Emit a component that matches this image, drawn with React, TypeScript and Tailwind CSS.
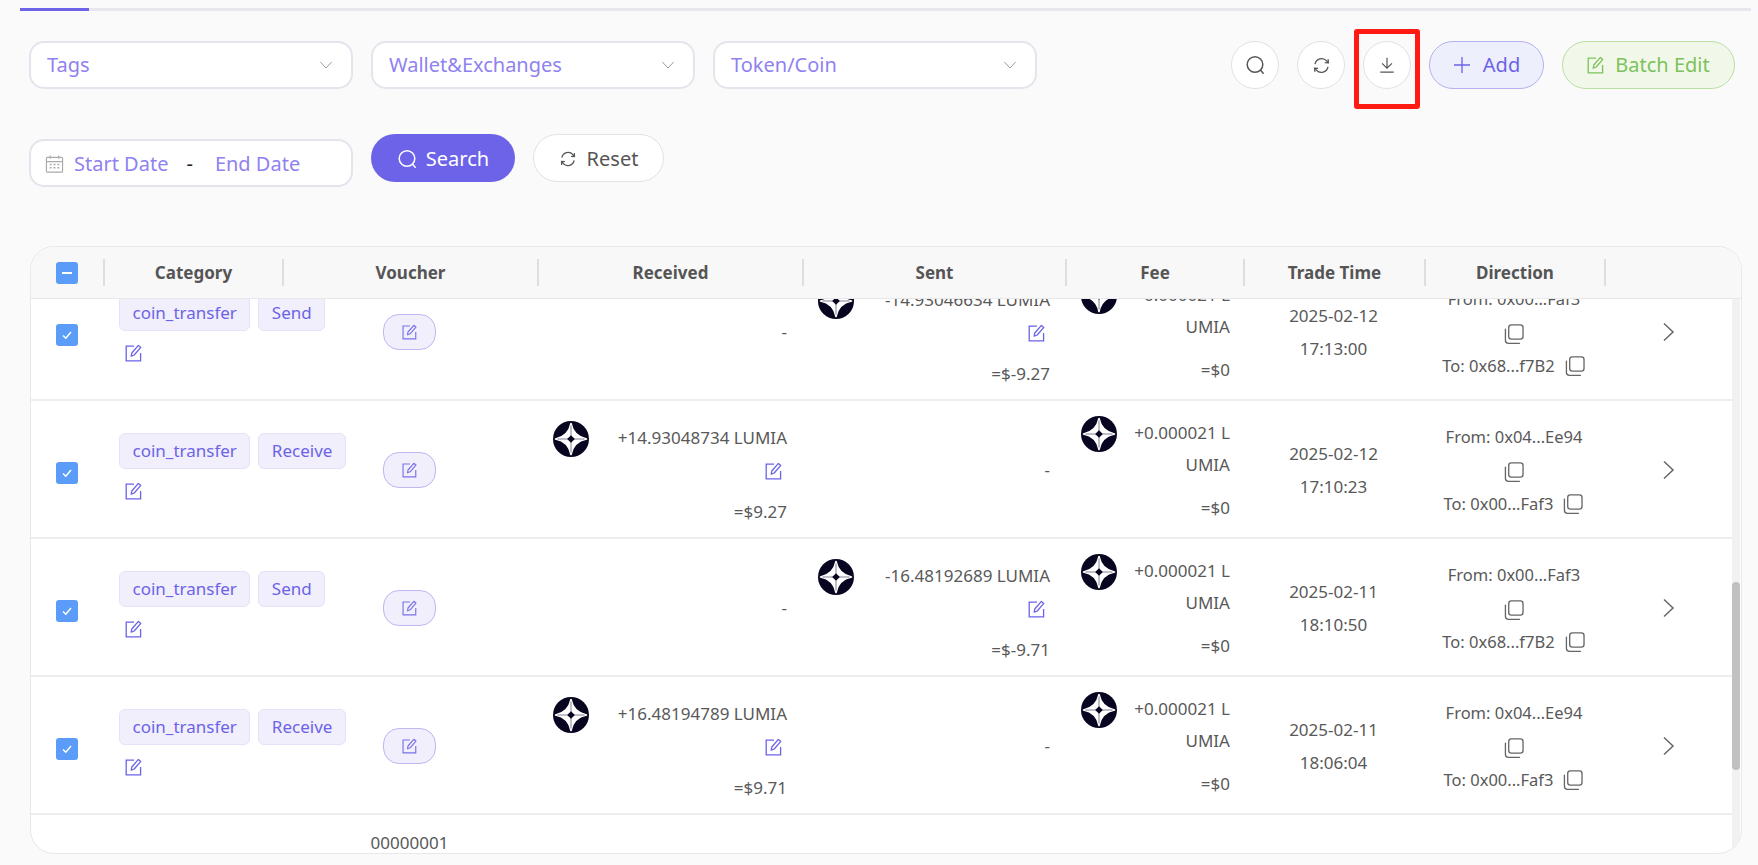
import React from "react";

const font = { fontFamily: '"Noto Sans", sans-serif' };

function Edit({ className = "" }: { className?: string }) {
  return (
    <svg viewBox="0 0 17 18" fill="none" stroke="currentColor" strokeWidth="1.3" className={className}>
      <path d="M9 2.2H1.2V16.8H15.6V9" />
      <path d="M6.2 12.2 6.8 9 13.4 1.4 15.8 3.4 9.2 11z" strokeLinejoin="round" />
    </svg>
  );
}

function Copy() {
  return (
    <svg viewBox="0 0 20 20" fill="none" stroke="#666" strokeWidth="1.2" className="w-[22px] h-[22px] inline-block">
      <rect x="5.2" y="1.7" width="13" height="13" rx="2.4" />
      <path d="M2.2 5.5v10.2a2.8 2.8 0 0 0 2.8 2.8h10" strokeLinecap="round" />
    </svg>
  );
}

function Logo() {
  return (
    <svg viewBox="0 0 36 36" className="w-9 h-9 shrink-0">
      <circle cx="18" cy="18" r="18" fill="#07051f" />
      <path d="M18 2.5Q20.5 15.5 33.5 18 20.5 20.5 18 33.5 15.5 20.5 2.5 18 15.5 15.5 18 2.5z" fill="#fff" stroke="#fff" strokeWidth="1.6" strokeLinejoin="round" />
      <path d="M18 4.5v27M4.5 18h27" stroke="#77758a" strokeWidth="0.9" />
      <path d="M18 14.2 21.8 18 18 21.8 14.2 18z" fill="#07051f" />
    </svg>
  );
}

function Chevron({ className = "" }: { className?: string }) {
  return (
    <svg viewBox="0 0 12 20" fill="none" stroke="currentColor" strokeWidth="1.5" className={className}>
      <path d="M1.5 1.5 10.5 10 1.5 18.5" />
    </svg>
  );
}

function SearchIcon({ className = "" }: { className?: string }) {
  return (
    <svg viewBox="0 0 20 20" fill="none" stroke="currentColor" strokeWidth="1.5" className={className}>
      <circle cx="10" cy="9.5" r="7.8" />
      <path d="m15.6 15.2 2.6 3" strokeLinecap="round" />
    </svg>
  );
}

function RefreshIcon({ className = "" }: { className?: string }) {
  return (
    <svg viewBox="0 0 20 20" fill="none" stroke="currentColor" strokeWidth="1.4" className={className}>
      <path d="M3.2 8.5A7 7 0 0 1 15.4 5.2L17 7" />
      <path d="M16.8 11.5A7 7 0 0 1 4.6 14.8L3 13" />
      <path d="M13.5 7 17.2 7.2 17 3.4M6.5 13 2.8 12.8 3 16.6" />
    </svg>
  );
}

function DownloadIcon({ className = "" }: { className?: string }) {
  return (
    <svg viewBox="0 0 20 20" fill="none" stroke="currentColor" strokeWidth="1.3" className={className}>
      <path d="M10 2v11.5M4.5 8.2 10 13.5l5.5-5.3M2.5 18h15" />
    </svg>
  );
}

function CalendarIcon() {
  return (
    <svg viewBox="0 0 20 20" fill="none" stroke="#aaa" strokeWidth="1.2" className="w-[19px] h-[20px]">
      <rect x="1.5" y="3" width="17" height="15.5" rx="1" />
      <path d="M1.5 7.5h17M5.5 1v3.5M14.5 1v3.5" />
      <path d="M5 10.5h2M9 10.5h2M13 10.5h2M5 14h2M9 14h2M13 14h2" strokeWidth="1.5" />
    </svg>
  );
}

function Select({ label }: { label: string }) {
  return (
    <div className="w-[324px] h-12 rounded-[15px] border-2 border-[#e4e4ec] bg-white flex items-center justify-between pl-[16px] pr-[17px]">
      <span className="text-[20px] text-[#8f82f0]">{label}</span>
      <Chevron className="w-[8px] h-[16px] rotate-90 text-[#9a9a9a] mr-1" />
    </div>
  );
}

function Check() {
  return (
    <div className="w-[22px] h-[22px] rounded-[3px] bg-[#5a9cf8] flex items-center justify-center">
      <svg viewBox="0 0 12 12" fill="none" stroke="#fff" strokeWidth="1.5" className="w-3 h-3">
        <path d="m2 6.5 2.8 2.7L10 3" />
      </svg>
    </div>
  );
}

type Row = {
  tag: string;
  rec: string[] | null;
  sent: string[] | null;
  date: string;
  time: string;
  from: string;
  to: string;
};

const rows: Row[] = [
  { tag: "Send", rec: null, sent: ["-14.93046634 LUMIA", "=$-9.27"], date: "2025-02-12", time: "17:13:00", from: "0x00...Faf3", to: "0x68...f7B2" },
  { tag: "Receive", rec: ["+14.93048734 LUMIA", "=$9.27"], sent: null, date: "2025-02-12", time: "17:10:23", from: "0x04...Ee94", to: "0x00...Faf3" },
  { tag: "Send", rec: null, sent: ["-16.48192689 LUMIA", "=$-9.71"], date: "2025-02-11", time: "18:10:50", from: "0x00...Faf3", to: "0x68...f7B2" },
  { tag: "Receive", rec: ["+16.48194789 LUMIA", "=$9.71"], sent: null, date: "2025-02-11", time: "18:06:04", from: "0x04...Ee94", to: "0x00...Faf3" },
];

const cols = "grid grid-cols-[72px_179px_255px_265px_263px_178px_181px_180px_1fr]";

function Amount({ v }: { v: string[] | null }) {
  if (!v) return <div className="flex items-center justify-end h-full pr-[15px]">-</div>;
  return (
    <div className="pt-[20px] pl-[16px] pr-[15px]">
      <div className="h-9 flex items-center justify-between">
        <Logo />
        <span className="mb-[2px]">{v[0]}</span>
      </div>
      <div className="h-[28px] flex items-center justify-end">
        <Edit className="w-[17px] h-[18px] text-[#6c63e8] mr-[5px]" />
      </div>
      <div className="h-[54px] flex items-center justify-end">{v[1]}</div>
    </div>
  );
}

export default function App() {
  const heads = ["Category", "Voucher", "Received", "Sent", "Fee", "Trade Time", "Direction", ""];
  return (
    <div style={font} className="relative w-[1758px] h-[865px] overflow-hidden bg-[#fafafa] pt-2 text-[#595959]">
      <div className="ml-5 w-[1731px] h-[3px] bg-[#e6e8ee]">
        <div className="w-[69px] h-[3px] bg-[#6c63e8]" />
      </div>

      <div className="mt-[30px] ml-[29px] mr-[23px] flex justify-between">
        <div className="flex gap-[18px]">
          <Select label="Tags" />
          <Select label="Wallet&Exchanges" />
          <Select label="Token/Coin" />
        </div>
        <div className="flex items-center">
          <div className="w-12 h-12 rounded-full border border-[#e2e2e6] bg-white flex items-center justify-center text-[#555]">
            <SearchIcon className="w-[20px] h-[20px]" />
          </div>
          <div className="ml-[18px] w-12 h-12 rounded-full border border-[#e2e2e6] bg-white flex items-center justify-center text-[#555]">
            <RefreshIcon className="w-[19px] h-[19px]" />
          </div>
          <div className="ml-[18px] w-12 h-12 rounded-full border border-[#e2e2e6] bg-white flex items-center justify-center text-[#555]">
            <DownloadIcon className="w-[18px] h-[18px]" />
          </div>
          <div className="ml-[18px] w-[115px] h-12 rounded-full border border-[#b5b0f0] bg-[#eeeffc] flex items-center justify-center gap-[12px] text-[#6c63e8] text-[20px]">
            <svg viewBox="0 0 18 18" stroke="currentColor" strokeWidth="1.3" className="w-[18px] h-[18px]">
              <path d="M9 1v16M1 9h16" />
            </svg>
            Add
          </div>
          <div className="ml-[18px] w-[173px] h-12 rounded-full border border-[#b9dfa3] bg-[#f1f8ea] flex items-center justify-center gap-[11px] text-[#7cc25a] text-[20px]">
            <Edit className="w-[17px] h-[18px]" />
            Batch Edit
          </div>
        </div>
      </div>

      <div className="absolute left-[1354px] top-[29px] w-[66px] h-[80px] border-[5px] border-[#ff1a12] rounded-[3px]" />

      <div className="mt-[45px] ml-[29px] flex gap-[18px]">
        <div className="w-[324px] h-[48px] mt-[5px] pt-[2px] rounded-[15px] border-2 border-[#e4e4ec] bg-white flex items-center pl-[14px] text-[20px] text-[#8f82f0]">
          <CalendarIcon />
          <span className="ml-[10px]">Start Date</span>
          <span className="ml-[18px] text-[#222]">-</span>
          <span className="ml-[22px]">End Date</span>
        </div>
        <div className="w-[144px] h-12 pt-[2px] rounded-[24px] bg-[#6c63e8] text-white text-[20px] flex items-center justify-center gap-[9px]">
          <SearchIcon className="w-[20px] h-[20px]" />
          Search
        </div>
        <div className="w-[131px] h-12 pt-[2px] rounded-[24px] border border-[#e2e2e6] bg-white text-[#555] text-[20px] flex items-center justify-center gap-[10px]">
          <RefreshIcon className="w-[18px] h-[18px]" />
          Reset
        </div>
      </div>

      <div className="mt-[59px] ml-[30px] w-[1712px] h-[608px] rounded-[24px] border border-[#e8e8ea] bg-white overflow-hidden flex flex-col text-[17px]">
        <div className={`${cols} h-[52px] shrink-0 bg-[#f8f8f9] border-b border-[#e8e8ea] items-center`}>
          <div className="flex justify-center pr-[1px]">
            <div className="w-[22px] h-[22px] rounded-[3px] bg-[#5a9cf8] flex items-center justify-center">
              <div className="w-[10px] h-[2px] bg-white" />
            </div>
          </div>
          {heads.map((h, i) => (
            <div key={i} className="h-[27px] border-l-2 border-[#dedee2] flex items-center justify-center font-bold text-[#555]">
              {h}
            </div>
          ))}
        </div>

        <div className="flex-1 flex min-h-0">
          <div className="flex-1 overflow-hidden">
            <div className="-mt-[36px]">
              {rows.map((r, i) => (
                <div key={i} className={`${cols} h-[138px] border-b-2 border-[#ededf0]`}>
                  <div className="flex justify-center items-center pt-[5px]">
                    <Check />
                  </div>
                  <div className="pt-[32px] pl-[16px]">
                    <div className="flex gap-[8px]">
                      <span className="h-9 px-[12.5px] rounded-[6px] border border-[#e4e2f8] bg-[#f0effb] text-[#6c63e8] flex items-center">coin_transfer</span>
                      <span className="h-9 px-[12.5px] rounded-[6px] border border-[#e4e2f8] bg-[#f0effb] text-[#6c63e8] flex items-center">{r.tag}</span>
                    </div>
                    <Edit className="mt-[13px] ml-[6px] w-[17px] h-[18px] text-[#6c63e8]" />
                  </div>
                  <div className="flex items-center justify-center">
                    <div className="w-[53px] h-9 rounded-[16px] border border-[#bdb8f2] bg-[#f0effb] flex items-center justify-center">
                      <Edit className="w-[15px] h-[16px] text-[#7a72e8]" />
                    </div>
                  </div>
                  <Amount v={r.rec} />
                  <Amount v={r.sent} />
                  <div className="pt-[15px] pl-[16px] pr-[13px]">
                    <div className="h-9 flex items-center justify-between">
                      <Logo />
                      <span className="mb-[2px]">+0.000021 L</span>
                    </div>
                    <div className="h-[26px] flex items-center justify-end">UMIA</div>
                    <div className="h-[60px] flex items-center justify-end">=$0</div>
                  </div>
                  <div className="flex flex-col justify-center items-center leading-[33px]">
                    <div>{r.date}</div>
                    <div>{r.time}</div>
                  </div>
                  <div className="pt-[19px] flex flex-col items-center leading-[33px] text-[16.5px]">
                    <div>From: {r.from}</div>
                    <div className="mt-[4px] h-[30px] flex items-center"><Copy /></div>
                    <div className="flex items-center gap-[9px]">To: {r.to}<Copy /></div>
                  </div>
                  <div className="flex items-center justify-center text-[#666]">
                    <Chevron className="w-[13px] h-[20px]" />
                  </div>
                </div>
              ))}
              <div className={`${cols} pt-[15px]`}>
                <div />
                <div />
                <div className="text-center">00000001</div>
              </div>
            </div>
          </div>
          <div className="w-[8px] mr-[1px] shrink-0 bg-[#f1f1f1]">
            <div className="w-[8px] h-[188px] mt-[283px] rounded-[4px] bg-[#c1c1c1]" />
          </div>
        </div>
      </div>
    </div>
  );
}
